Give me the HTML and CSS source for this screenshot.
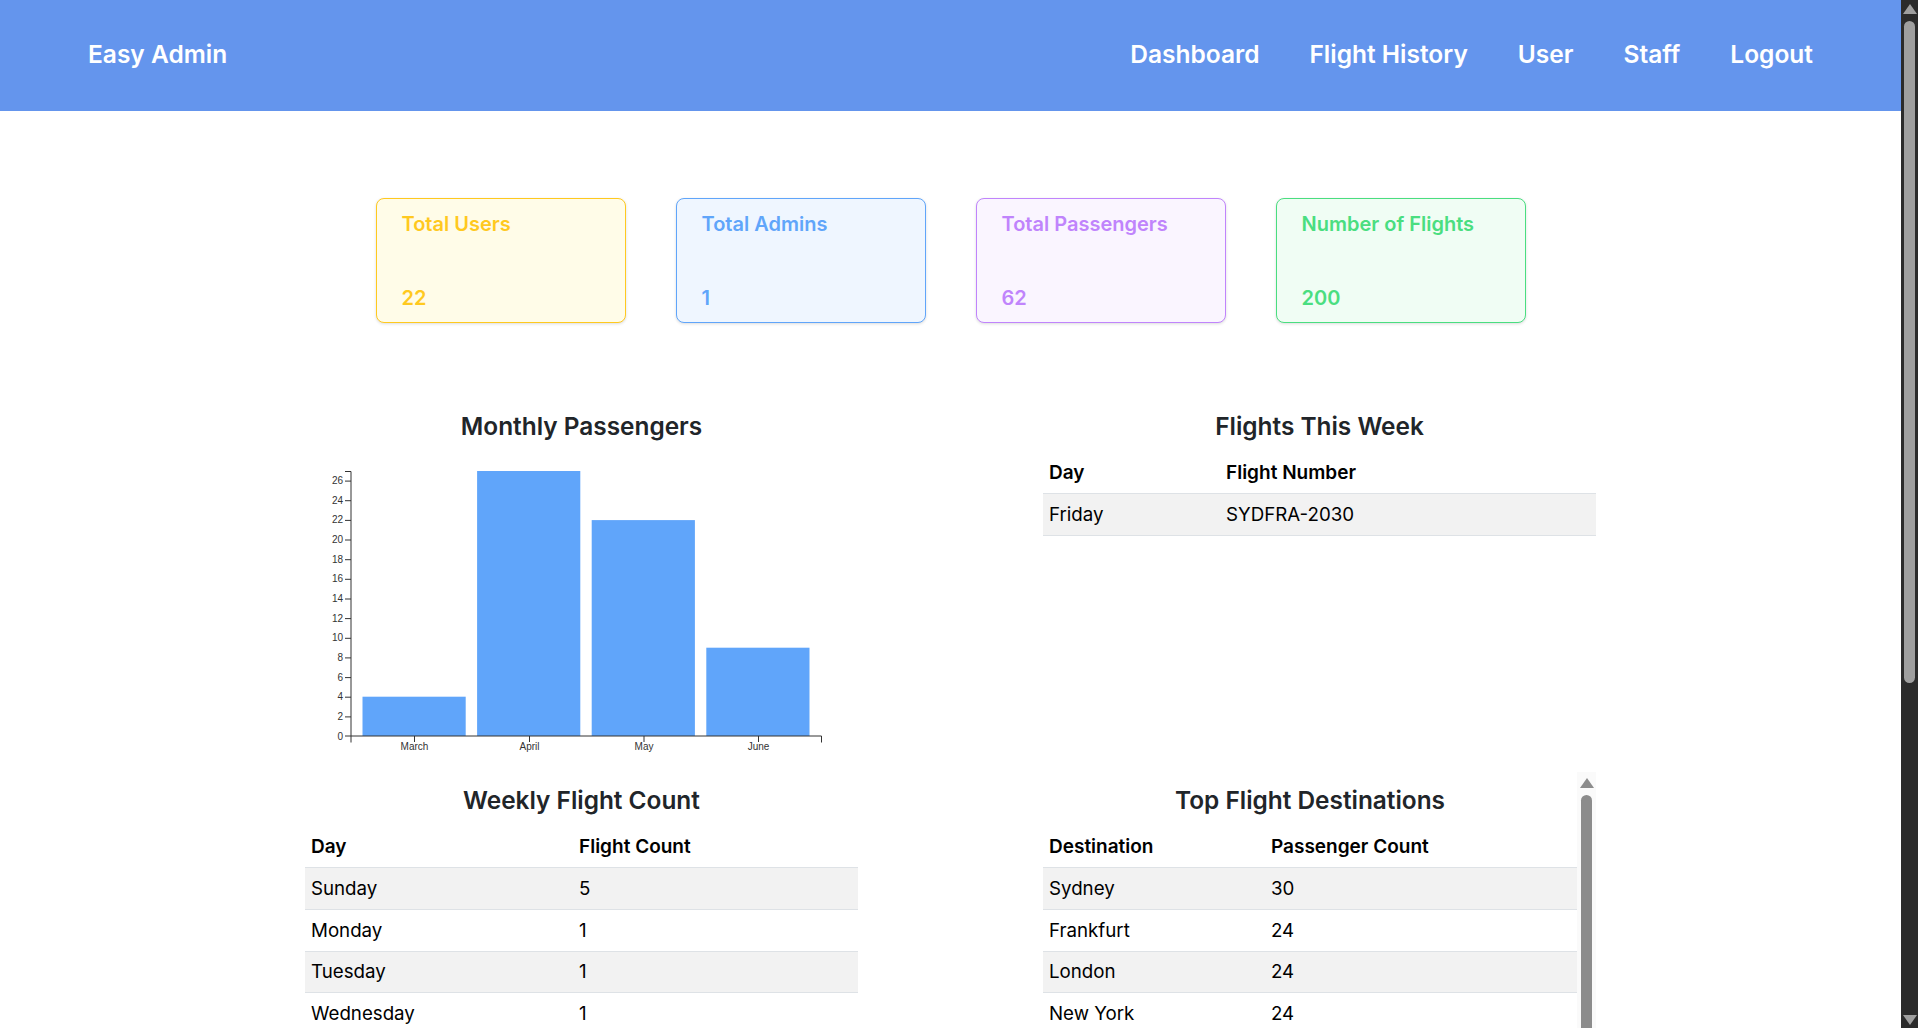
FILE: index.html
```html
<!DOCTYPE html>
<html lang="en">
<head>
<meta charset="utf-8">
<title>Easy Admin</title>
<link rel="stylesheet" href="styles.css">
</head>
<body>
<div class="page">
  <div class="content">
    <header class="navbar">
      <a class="brand">Easy Admin</a>
      <nav class="nav-links">
        <a>Dashboard</a><a>Flight History</a><a>User</a><a>Staff</a><a>Logout</a>
      </nav>
    </header>
    <section class="cards">
      <div class="card card-yellow"><div>Total Users</div><div>22</div></div>
      <div class="card card-blue"><div>Total Admins</div><div>1</div></div>
      <div class="card card-purple"><div>Total Passengers</div><div>62</div></div>
      <div class="card card-green"><div>Number of Flights</div><div>200</div></div>
    </section>
    <section class="panels">
      <div class="panel panel-chart">
        <h2>Monthly Passengers</h2>
        <svg class="chart" width="553" height="290" viewBox="0 0 553 290">
          <g class="bars">
            <rect x="57.5" y="225.7" width="103.2" height="39.3"/>
            <rect x="172.1" y="0" width="103.2" height="265"/>
            <rect x="286.7" y="49.1" width="103.2" height="215.9"/>
            <rect x="401.3" y="176.7" width="103.2" height="88.3"/>
          </g>
          <path class="axis" d="M40 0.5H46V265H516.5V271.5M46 265H40M46 265V271.5"/>
          <path class="axis" d="M40 245.9H46M40 226.2H46M40 206.6H46M40 186.9H46M40 167.3H46M40 147.6H46M40 128H46M40 108.3H46M40 88.7H46M40 69H46M40 49.4H46M40 29.7H46M40 10.1H46M109.5 265V271M224.5 265V271M339 265V271M453.5 265V271"/>
          <g class="y-labels">
            <text x="38" y="268.5">0</text><text x="38" y="248.8">2</text><text x="38" y="229.2">4</text><text x="38" y="209.5">6</text><text x="38" y="189.9">8</text><text x="38" y="170.2">10</text><text x="38" y="150.6">12</text><text x="38" y="130.9">14</text><text x="38" y="111.3">16</text><text x="38" y="91.6">18</text><text x="38" y="72">20</text><text x="38" y="52.3">22</text><text x="38" y="32.7">24</text><text x="38" y="13">26</text>
          </g>
          <g class="x-labels">
            <text x="109.5" y="279">March</text><text x="224.5" y="279">April</text><text x="339" y="279">May</text><text x="453.5" y="279">June</text>
          </g>
        </svg>
      </div>
      <div class="panel">
        <h2>Flights This Week</h2>
        <table class="table table-flights">
          <thead><tr><th>Day</th><th>Flight Number</th></tr></thead>
          <tbody><tr><td>Friday</td><td>SYDFRA-2030</td></tr></tbody>
        </table>
      </div>
      <div class="panel panel-bottom">
        <h2>Weekly Flight Count</h2>
        <table class="table table-weekly">
          <thead><tr><th>Day</th><th>Flight Count</th></tr></thead>
          <tbody>
            <tr><td>Sunday</td><td>5</td></tr>
            <tr><td>Monday</td><td>1</td></tr>
            <tr><td>Tuesday</td><td>1</td></tr>
            <tr><td>Wednesday</td><td>1</td></tr>
          </tbody>
        </table>
      </div>
      <div class="panel panel-bottom panel-scroll">
        <div class="scroll-body">
          <h2>Top Flight Destinations</h2>
          <table class="table table-dest">
            <thead><tr><th>Destination</th><th>Passenger Count</th></tr></thead>
            <tbody>
              <tr><td>Sydney</td><td>30</td></tr>
              <tr><td>Frankfurt</td><td>24</td></tr>
              <tr><td>London</td><td>24</td></tr>
              <tr><td>New York</td><td>24</td></tr>
            </tbody>
          </table>
        </div>
        <div class="mini-scrollbar"><span class="mini-arrow"></span><span class="mini-thumb"></span></div>
      </div>
    </section>
  </div>
  <div class="page-scrollbar">
    <span class="page-arrow"></span>
    <span class="page-thumb"></span>
    <span class="page-arrow-down"></span>
  </div>
</div>
</body>
</html>
```
FILE: styles.css
```css
* { box-sizing: border-box; }
html, body { margin: 0; height: 100%; overflow: hidden; }
body { font-family: Inter, "Noto Sans", sans-serif; color: #212529; background: #fff; }
.page { display: flex; height: 1028px; overflow: hidden; }
.content { flex: 1; min-width: 0; overflow: hidden; }

.navbar { height: 111px; padding: 0 88px 3px; background: #6495ed; color: #fff; display: flex; align-items: center; justify-content: space-between; font-size: 24.5px; font-weight: 600; }
.nav-links { display: flex; gap: 50px; }

.cards { display: flex; justify-content: center; gap: 50px; margin-top: 87px; }
.card { width: 250px; height: 125px; border: 1px solid; border-radius: 8px; padding: 13px 25px 12px; display: flex; flex-direction: column; justify-content: space-between; font-size: 20px; font-weight: 600; line-height: 24px; box-shadow: 0 1px 3px rgba(0,0,0,.14); }
.card-yellow { color: #ffc91f; border-color: #ffc91f; background: #fffce8; }
.card-blue { color: #60a5fa; border-color: #60a5fa; background: #eff6ff; }
.card-purple { color: #c084fc; border-color: #c084fc; background: #faf5ff; }
.card-green { color: #4ade80; border-color: #4ade80; background: #f0fdf4; }

.panels { display: grid; grid-template-columns: 553px 553px; grid-template-rows: 374px auto; column-gap: 185px; justify-content: center; margin-top: 88px; }
.panel h2 { margin: 0 0 11px; padding-top: 1px; font-size: 24.4px; font-weight: 600; line-height: 29px; text-align: center; }
.chart { display: block; margin-top: 30px; overflow: visible; }
.bars rect { fill: #60a5fa; }
.axis { fill: none; stroke: #333; stroke-width: 1; }
.chart text { font-family: "Liberation Sans", sans-serif; font-size: 10px; fill: #333; }
.y-labels text { text-anchor: end; }
.x-labels text { text-anchor: middle; }

.table { width: 100%; border-collapse: collapse; table-layout: fixed; font-size: 18.72px; color: #000; }
.table th, .table td { padding: 0 6px; height: 41.7px; text-align: left; }
.table th { font-size: 19px; font-weight: 600; }
.table td { border-top: 1px solid #dee2e6; }
.table tbody tr:last-child td { border-bottom: 1px solid #dee2e6; }
.table tbody tr:nth-child(odd) { background: #f2f2f2; }
.table-flights th:first-child { width: 177px; }
.table-weekly th:first-child { width: 268px; }
.table-dest th:first-child { width: 222px; }

.panel-bottom { height: 300px; }
.panel-scroll { display: flex; }
.scroll-body { flex: 1; min-width: 0; }
.mini-scrollbar { width: 19px; margin-top: -13px; background: #fafafa; display: flex; flex-direction: column; align-items: center; padding-top: 6px; gap: 7px; flex: none; }
.mini-arrow { width: 0; height: 0; border-left: 7px solid transparent; border-right: 7px solid transparent; border-bottom: 10px solid #8c8c8c; }
.mini-thumb { width: 11px; flex: 1; background: #8c8c8c; border-radius: 6px 6px 0 0; }

.page-scrollbar { flex: none; width: 17px; background: #2b2b2b; display: flex; flex-direction: column; align-items: center; padding: 4px 0 3px; }
.page-arrow { width: 0; height: 0; border-left: 7px solid transparent; border-right: 7px solid transparent; border-bottom: 10px solid #9f9f9f; }
.page-thumb { width: 11px; height: 662px; margin-top: 7px; background: #9f9f9f; border-radius: 6px; }
.page-arrow-down { width: 0; height: 0; margin-top: auto; border-left: 7px solid transparent; border-right: 7px solid transparent; border-top: 10px solid #9f9f9f; }
```
